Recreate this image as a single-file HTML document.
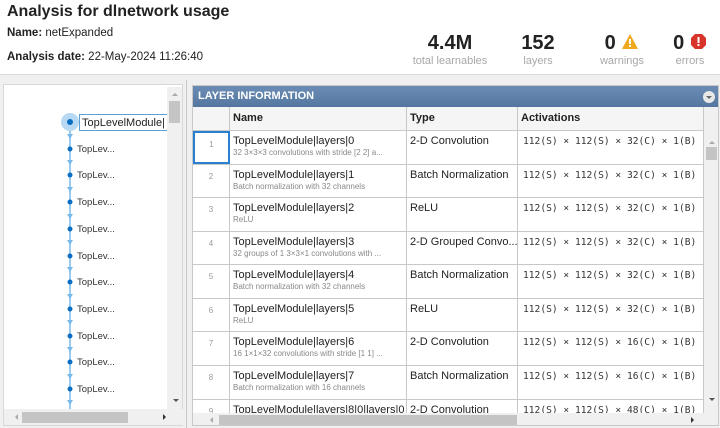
<!DOCTYPE html>
<html><head><meta charset="utf-8"><style>
*{margin:0;padding:0;box-sizing:border-box}
body{width:720px;height:428px;overflow:hidden;background:#f0f0f0;font-family:"Liberation Sans",Arial,sans-serif;position:relative}
.hdr{position:absolute;left:0;top:0;width:720px;height:75px;background:#fff;border-bottom:1px solid #dcdcdc}
.a{position:absolute;white-space:nowrap}
.stat{position:absolute;text-align:center;white-space:nowrap}
.big{font-size:20px;font-weight:bold;color:#222}
.lbl{font-size:11px;color:#a8a8a8}
.tree{position:absolute;left:3px;top:84px;width:180px;height:342px;background:#fff;border:1px solid #d8d8d8}
.tbl{position:absolute;left:192px;top:85px;width:527px;height:341px;background:#fff;border:1px solid #c8c8c8;overflow:hidden}
.title{position:absolute;left:0;top:0;width:527px;height:21px;background:linear-gradient(#6b8db5,#55779f);color:#fff;font-size:11px;font-weight:bold;line-height:21px;padding-left:5px}
.row{position:absolute;left:0;width:511px;border-bottom:1px solid #c8c8c8;font-family:"Liberation Sans",sans-serif}
.c{position:absolute;top:0;bottom:0;border-right:1px solid #c8c8c8}
.num{font-size:8px;color:#999;text-align:center;padding-top:7px}
.nm{font-size:11px;color:#222;padding:4px 0 0 3px;white-space:nowrap;overflow:hidden}
.nm small{display:block;font-size:8px;color:#888;margin-top:1px}
.ty{font-size:11px;color:#222;padding:4px 0 0 3px;white-space:nowrap;overflow:hidden}
.ac{font-family:"DejaVu Sans Mono","Liberation Mono",monospace;font-size:9.6px;color:#333;padding:5px 0 0 5px;white-space:nowrap;overflow:hidden}
.hd{font-weight:bold;font-size:11px;color:#222;padding:5px 0 0 3px}
</style></head><body>
<div class="hdr">
<div class="a" style="left:7px;top:3px;font-size:16px;font-weight:bold;color:#222">Analysis for dlnetwork usage</div>
<div class="a" style="left:7px;top:27px;font-size:11.5px;color:#222"><b>Name:</b> netExpanded</div>
<div class="a" style="left:7px;top:51px;font-size:11.5px;color:#222"><b>Analysis date:</b> 22-May-2024 11:26:40</div>
<div class="stat" style="left:410px;top:32px;width:80px"><div class="big">4.4M</div><div class="lbl">total learnables</div></div>
<div class="stat" style="left:508px;top:32px;width:60px"><div class="big">152</div><div class="lbl">layers</div></div>
<div class="stat" style="left:592px;top:32px;width:60px"><div class="big">0 <svg width="18" height="17" viewBox="0 0 18 17" style="vertical-align:-1px"><path d="M9 1L17 16H1Z" fill="#f0a81e"/><rect x="8" y="6" width="2" height="5" fill="#fff"/><rect x="8" y="12" width="2" height="2" fill="#fff"/></svg></div><div class="lbl">warnings</div></div>
<div class="stat" style="left:660px;top:32px;width:60px"><div class="big">0 <svg width="17" height="17" viewBox="0 0 17 17" style="vertical-align:-1px"><path d="M5 1H12L16 5V12L12 16H5L1 12V5Z" fill="#d9342b"/><rect x="7.5" y="4" width="2" height="6" fill="#fff"/><rect x="7.5" y="11" width="2" height="2" fill="#fff"/></svg></div><div class="lbl">errors</div></div>
</div>
<div class="a" style="left:186px;top:80px;width:1px;height:348px;background:#c8c8c8"></div>
<div class="tree">
<svg width="180" height="342" style="position:absolute;left:0;top:0">
<line x1="66" y1="36" x2="66" y2="326" stroke="#9ccbf0" stroke-width="2"/>
<circle cx="66" cy="37" r="9" fill="#b8d9f3"/><circle cx="66" cy="37" r="3" fill="#0a6fc2"/>
<g fill="#7ab8e8">
<path d="M63 49h6l-3 5z"/><path d="M63 75h6l-3 5z"/><path d="M63 102h6l-3 5z"/><path d="M63 129h6l-3 5z"/><path d="M63 155h6l-3 5z"/><path d="M63 182h6l-3 5z"/><path d="M63 209h6l-3 5z"/><path d="M63 235h6l-3 5z"/><path d="M63 262h6l-3 5z"/><path d="M63 289h6l-3 5z"/><path d="M63 315h6l-3 5z"/>
</g>
<g fill="#0a6fc2">
<circle cx="66" cy="64" r="2.5"/><circle cx="66" cy="90" r="2.5"/><circle cx="66" cy="117" r="2.5"/><circle cx="66" cy="144" r="2.5"/><circle cx="66" cy="171" r="2.5"/><circle cx="66" cy="197" r="2.5"/><circle cx="66" cy="224" r="2.5"/><circle cx="66" cy="251" r="2.5"/><circle cx="66" cy="277" r="2.5"/><circle cx="66" cy="304" r="2.5"/>
</g>
<g font-family="Liberation Sans" font-size="9.5" fill="#333">
<text x="73" y="67">TopLev...</text><text x="73" y="93">TopLev...</text><text x="73" y="120">TopLev...</text><text x="73" y="147">TopLev...</text><text x="73" y="174">TopLev...</text><text x="73" y="200">TopLev...</text><text x="73" y="227">TopLev...</text><text x="73" y="254">TopLev...</text><text x="73" y="280">TopLev...</text><text x="73" y="307">TopLev...</text>
</g>
<rect x="75.5" y="29.5" width="90" height="16" fill="#fff" stroke="#5ca0d8"/>
<text x="78" y="41" font-family="Liberation Sans" font-size="11" fill="#222">TopLevelModule|</text>
<rect x="163" y="2" width="15" height="322" fill="#f0f0f0"/>
<rect x="165" y="16" width="11" height="22" fill="#c4c4c4"/>
<path d="M168 11l3-3 3 3z" fill="#aaa"/><path d="M169 314l3 3 3-3z" fill="#555"/>
<rect x="0" y="324" width="180" height="16" fill="#f0f0f0"/>
<rect x="18" y="327" width="106" height="11" fill="#c4c4c4"/>
<path d="M11 332l3-3v6z" fill="#aaa"/><path d="M159 329l3 3-3 3z" fill="#333"/>
</svg>
</div>
<div class="tbl">
<div class="title">LAYER INFORMATION
<svg width="14" height="14" style="position:absolute;right:4px;top:4px"><circle cx="7" cy="7" r="6" fill="#e8e8e8"/><path d="M4 6h6l-3 3z" fill="#666"/></svg></div>
<div class="row" style="top:21px;height:24px;background:#f5f5f5">
<div class="c" style="left:0;width:37px"></div>
<div class="c hd" style="left:37px;width:177px">Name</div>
<div class="c hd" style="left:214px;width:111px">Type</div>
<div class="c hd" style="left:325px;width:186px">Activations</div>
</div>
<div class="row" style="top:45px;height:34px"><div class="c num" style="left:0;width:37px;border:2px solid #2a7fd0">1</div><div class="c nm" style="left:37px;width:177px">TopLevelModule|layers|0<small>32 3×3×3 convolutions with stride [2 2] a...</small></div><div class="c ty" style="left:214px;width:111px">2-D Convolution</div><div class="c ac" style="left:325px;width:186px">112(S) × 112(S) × 32(C) × 1(B)</div></div>
<div class="row" style="top:79px;height:33px"><div class="c num" style="left:0;width:37px">2</div><div class="c nm" style="left:37px;width:177px">TopLevelModule|layers|1<small>Batch normalization with 32 channels</small></div><div class="c ty" style="left:214px;width:111px">Batch Normalization</div><div class="c ac" style="left:325px;width:186px">112(S) × 112(S) × 32(C) × 1(B)</div></div>
<div class="row" style="top:112px;height:34px"><div class="c num" style="left:0;width:37px">3</div><div class="c nm" style="left:37px;width:177px">TopLevelModule|layers|2<small>ReLU</small></div><div class="c ty" style="left:214px;width:111px">ReLU</div><div class="c ac" style="left:325px;width:186px">112(S) × 112(S) × 32(C) × 1(B)</div></div>
<div class="row" style="top:146px;height:33px"><div class="c num" style="left:0;width:37px">4</div><div class="c nm" style="left:37px;width:177px">TopLevelModule|layers|3<small>32 groups of 1 3×3×1 convolutions with ...</small></div><div class="c ty" style="left:214px;width:111px">2-D Grouped Convo...</div><div class="c ac" style="left:325px;width:186px">112(S) × 112(S) × 32(C) × 1(B)</div></div>
<div class="row" style="top:179px;height:34px"><div class="c num" style="left:0;width:37px">5</div><div class="c nm" style="left:37px;width:177px">TopLevelModule|layers|4<small>Batch normalization with 32 channels</small></div><div class="c ty" style="left:214px;width:111px">Batch Normalization</div><div class="c ac" style="left:325px;width:186px">112(S) × 112(S) × 32(C) × 1(B)</div></div>
<div class="row" style="top:213px;height:33px"><div class="c num" style="left:0;width:37px">6</div><div class="c nm" style="left:37px;width:177px">TopLevelModule|layers|5<small>ReLU</small></div><div class="c ty" style="left:214px;width:111px">ReLU</div><div class="c ac" style="left:325px;width:186px">112(S) × 112(S) × 32(C) × 1(B)</div></div>
<div class="row" style="top:246px;height:34px"><div class="c num" style="left:0;width:37px">7</div><div class="c nm" style="left:37px;width:177px">TopLevelModule|layers|6<small>16 1×1×32 convolutions with stride [1 1] ...</small></div><div class="c ty" style="left:214px;width:111px">2-D Convolution</div><div class="c ac" style="left:325px;width:186px">112(S) × 112(S) × 16(C) × 1(B)</div></div>
<div class="row" style="top:280px;height:34px"><div class="c num" style="left:0;width:37px">8</div><div class="c nm" style="left:37px;width:177px">TopLevelModule|layers|7<small>Batch normalization with 16 channels</small></div><div class="c ty" style="left:214px;width:111px">Batch Normalization</div><div class="c ac" style="left:325px;width:186px">112(S) × 112(S) × 16(C) × 1(B)</div></div>
<div class="row" style="top:314px;height:34px"><div class="c num" style="left:0;width:37px">9</div><div class="c nm" style="left:37px;width:177px">TopLevelModule|layers|8|0|layers|0</div><div class="c ty" style="left:214px;width:111px">2-D Convolution</div><div class="c ac" style="left:325px;width:186px">112(S) × 112(S) × 48(C) × 1(B)</div></div>
<div class="a" style="left:511px;top:21px;width:16px;height:306px;background:#f0f0f0"></div>
<svg class="a" style="left:511px;top:45px" width="16" height="290"><path d="M5 13l3-3 3 3z" fill="#aaa"/><rect x="2" y="16" width="11" height="13" fill="#c4c4c4"/><path d="M5 267l3 3 3-3z" fill="#555"/></svg>
<div class="a" style="left:0;top:327px;width:527px;height:14px;background:#f0f0f0"></div>
<svg class="a" style="left:0;top:327px" width="527" height="14"><path d="M17 7l3-3v6z" fill="#aaa"/><rect x="26" y="2" width="298" height="10" fill="#c4c4c4"/><path d="M498 4l3 3-3 3z" fill="#333"/></svg>
</div>
</body></html>
